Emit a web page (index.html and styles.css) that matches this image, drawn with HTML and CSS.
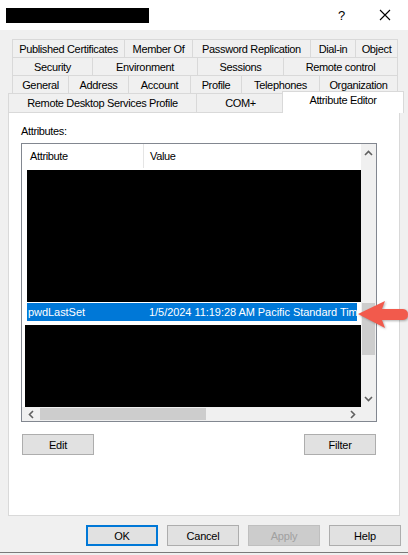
FILE: index.html
```html
<!DOCTYPE html>
<html lang="en">
<head>
    <meta charset="UTF-8">
    <title>Properties</title>
    <link rel="stylesheet" href="styles.css">
</head>
<body>
    <div class="titlebar">
        <div class="title-redact"></div>
        <span class="help">?</span>
        <svg class="close" width="12" height="12" viewBox="0 0 12 12">
            <path d="M1 1 L11 11 M11 1 L1 11" stroke="#000" stroke-width="1.1" fill="none"/>
        </svg>
    </div>

    <div class="tabs">
        <div class="tab-row row-1">
            <div class="tab">Published Certificates</div>
            <div class="tab">Member Of</div>
            <div class="tab">Password Replication</div>
            <div class="tab">Dial-in</div>
            <div class="tab">Object</div>
        </div>
        <div class="tab-row row-2">
            <div class="tab">Security</div>
            <div class="tab">Environment</div>
            <div class="tab">Sessions</div>
            <div class="tab">Remote control</div>
        </div>
        <div class="tab-row row-3">
            <div class="tab">General</div>
            <div class="tab">Address</div>
            <div class="tab">Account</div>
            <div class="tab">Profile</div>
            <div class="tab">Telephones</div>
            <div class="tab">Organization</div>
        </div>
        <div class="tab-row row-4">
            <div class="tab">Remote Desktop Services Profile</div>
            <div class="tab">COM+</div>
            <div class="tab active">Attribute Editor</div>
        </div>
    </div>

    <div class="panel">
        <div class="label">Attributes:</div>
        <div class="listbox">
            <div class="list-main">
                <div class="list-header">
                    <div class="col-attr">Attribute</div>
                    <div class="col-value">Value</div>
                </div>
                <div class="redact redact-top"></div>
                <div class="list-row selected">
                    <span class="col-attr">pwdLastSet</span>
                    <span class="col-value">1/5/2024 11:19:28 AM Pacific Standard Tim</span>
                </div>
                <div class="redact redact-bottom"></div>
            </div>
            <div class="vscroll">
                <div class="arrow-btn">
                    <svg width="9" height="6" viewBox="0 0 9 6"><path d="M1 5 L4.5 1.5 L8 5" stroke="#606060" stroke-width="1.6" fill="none"/></svg>
                </div>
                <div class="vtrack"><div class="vthumb"></div></div>
                <div class="arrow-btn">
                    <svg width="9" height="6" viewBox="0 0 9 6"><path d="M1 1 L4.5 4.5 L8 1" stroke="#606060" stroke-width="1.6" fill="none"/></svg>
                </div>
            </div>
            <div class="hscroll">
                <div class="arrow-btn">
                    <svg width="6" height="9" viewBox="0 0 6 9"><path d="M5 1 L1.5 4.5 L5 8" stroke="#606060" stroke-width="1.6" fill="none"/></svg>
                </div>
                <div class="htrack"><div class="hthumb"></div></div>
                <div class="arrow-btn">
                    <svg width="6" height="9" viewBox="0 0 6 9"><path d="M1 1 L4.5 4.5 L1 8" stroke="#606060" stroke-width="1.6" fill="none"/></svg>
                </div>
            </div>
            <div class="corner"></div>
        </div>
        <div class="panel-buttons">
            <button class="btn">Edit</button>
            <button class="btn">Filter</button>
        </div>
    </div>

    <div class="footer">
        <button class="btn default">OK</button>
        <button class="btn">Cancel</button>
        <button class="btn disabled">Apply</button>
        <button class="btn">Help</button>
    </div>

    <svg class="callout" width="56" height="34" viewBox="0 0 56 34">
        <path d="M4 16 L31 3 L28 11 L49 11 Q54 11.5 54 16.5 Q54 21.5 49 22 L28 22 L31 30 Z" fill="#f25a4c"/>
    </svg>
</body>
</html>
```

FILE: styles.css
```css
body {
    margin: 0;
    width: 408px;
    height: 555px;
    overflow: hidden;
    position: relative;
    background: #f0f0f0;
    font-family: "Liberation Sans", Arial, sans-serif;
    font-size: 11px;
    letter-spacing: -0.35px;
    color: #000;
}

.titlebar {
    height: 30px;
    background: #fff;
    display: flex;
    align-items: center;
}

.title-redact {
    width: 143px;
    height: 15px;
    margin-left: 6px;
    background: #000;
}

.help {
    margin-left: auto;
    font-size: 13px;
    margin-right: 34px;
}

.close {
    margin-right: 17px;
}

.tabs {
    padding-top: 9px;
}

.tab-row {
    display: grid;
    height: 18px;
}

.row-1 {
    grid-template-columns: 112px 68px 118px 45px 42px;
    margin-left: 12px;
}

.row-2 {
    grid-template-columns: 80px 105px 86px 114px;
    margin-left: 12px;
}

.row-3 {
    grid-template-columns: 56px 60px 62px 51px 78px 78px;
    margin-left: 12px;
}

.row-4 {
    grid-template-columns: 188px 88px 118px;
    margin-left: 8px;
    height: 19px;
}

.tab {
    border: 1px solid #d9d9d9;
    border-bottom: none;
    margin-right: -1px;
    text-align: center;
    line-height: 18px;
    white-space: nowrap;
    background: #f0f0f0;
}

.tab.active {
    background: #fff;
    margin: -2px -2px -1px -2px;
    line-height: 17px;
    position: relative;
    z-index: 1;
}

.panel {
    margin-left: 8px;
    width: 392px;
    height: 404px;
    box-sizing: border-box;
    border: 1px solid #d9d9d9;
    background: #fff;
    padding: 12px 0 0 12px;
}

.label {
    line-height: 13px;
    margin-bottom: 5px;
}

.listbox {
    width: 356px;
    height: 279px;
    box-sizing: border-box;
    border: 1px solid #828790;
    display: grid;
    grid-template-columns: 339px 15px;
    grid-template-rows: 263px 14px;
}

.list-main {
    overflow: hidden;
}

.list-header {
    height: 24px;
    display: flex;
    align-items: center;
}

.list-header .col-attr {
    width: 113px;
    padding-left: 8px;
    height: 24px;
    line-height: 24px;
    border-right: 1px solid #e5e5e5;
}

.list-header .col-value {
    padding-left: 6px;
}

.redact {
    background: #000;
}

.redact-top {
    height: 132px;
    margin: 2px 0 1px 5px;
}

.redact-bottom {
    height: 82px;
    margin: 4px 0 0 3px;
}

.list-row {
    height: 18px;
    line-height: 18px;
    display: flex;
    white-space: nowrap;
    margin: 0 4px 0 5px;
    letter-spacing: -0.05px;
}

.list-row.selected {
    background: #0078d7;
    color: #fff;
}

.list-row .col-attr {
    width: 121px;
    padding-left: 1px;
    flex-shrink: 0;
}

.vscroll {
    background: #f0f0f0;
    display: flex;
    flex-direction: column;
}

.vscroll .arrow-btn {
    height: 17px;
}

.vtrack {
    flex: 1;
}

.vthumb {
    margin: 142px 1px 0 1px;
    height: 52px;
    background: #cdcdcd;
}

.hscroll {
    background: #f0f0f0;
    display: flex;
}

.hscroll .arrow-btn {
    width: 17px;
}

.htrack {
    flex: 1;
}

.hthumb {
    margin: 1px 0 1px 1px;
    width: 166px;
    height: 12px;
    background: #cdcdcd;
}

.arrow-btn {
    display: flex;
    align-items: center;
    justify-content: center;
}

.corner {
    background: #f0f0f0;
}

.panel-buttons {
    display: flex;
    justify-content: space-between;
    width: 354px;
    margin: 12px 0 0 1px;
}

.btn {
    width: 72px;
    height: 21px;
    box-sizing: border-box;
    background: #e1e1e1;
    border: 1px solid #adadad;
    font-family: "Liberation Sans", Arial, sans-serif;
    font-size: 11px;
    letter-spacing: -0.2px;
    color: #000;
    padding: 0;
    border-radius: 0;
}

.btn.default {
    border: 2px solid #0078d7;
}

.btn.disabled {
    background: #cccccc;
    border-color: #bfbfbf;
    color: #a0a0a0;
}

.footer {
    height: 37px;
    border-bottom: 1px solid #7a7a7a;
    box-sizing: border-box;
    display: flex;
    justify-content: flex-end;
    align-items: flex-start;
    gap: 9px;
    padding: 9px 7px 0 0;
}

.callout {
    position: absolute;
    left: 354px;
    top: 298px;
    filter: drop-shadow(1px 1px 1px rgba(0, 0, 0, 0.3));
}
```
